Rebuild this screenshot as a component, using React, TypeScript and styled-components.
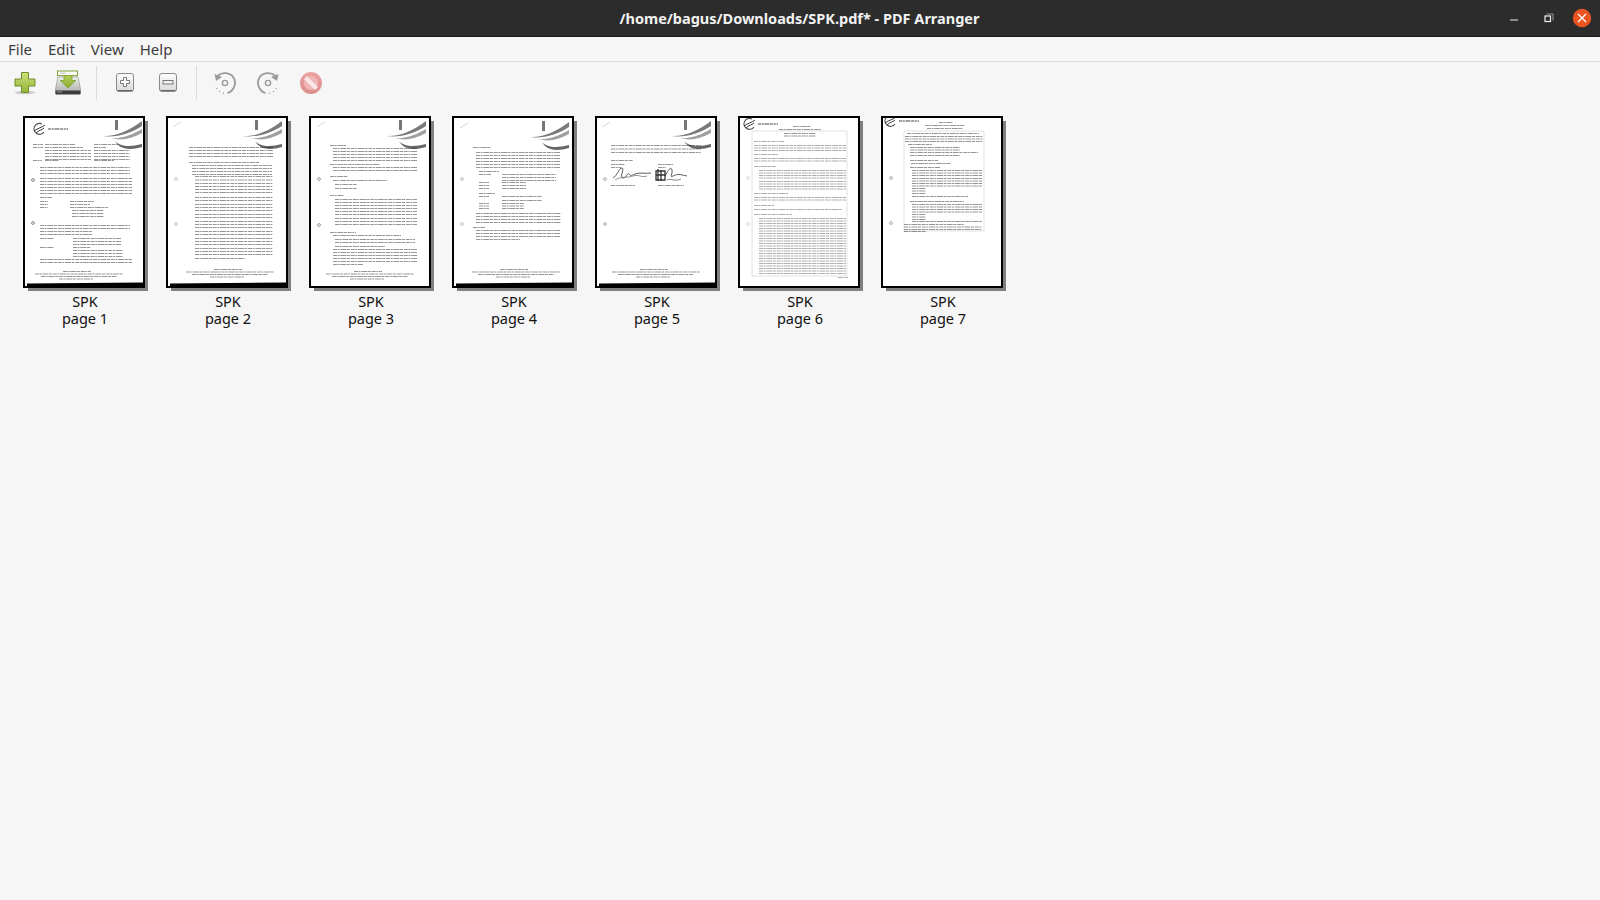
import React from 'react'
import styled, { createGlobalStyle } from 'styled-components'

const GlobalStyle = createGlobalStyle`
  html, body, #root {
    margin: 0;
    height: 100%;
  }
  body {
    background: #f6f6f6;
    font-family: "Noto Sans", "Open Sans", sans-serif;
    overflow: hidden;
  }
`

const Window = styled.div`
  width: 1600px;
  height: 900px;
  display: flex;
  flex-direction: column;
  background: #f6f6f6;
`

const TitleBar = styled.header`
  height: 36px;
  flex: none;
  display: grid;
  grid-template-columns: 1fr auto 1fr;
  align-items: center;
  background: #2d2c2c;
  border-bottom: 1px solid #1c1c1c;
`

const Title = styled.div`
  grid-column: 2;
  color: #f2f2f2;
  font-size: 14.5px;
  font-weight: 700;
  margin-right: 1px;
`

const WindowControls = styled.div`
  grid-column: 3;
  justify-self: end;
  display: flex;
  align-items: center;
  gap: 13px;
  padding-right: 8px;
`

const ControlSlot = styled.div`
  width: 20px;
  height: 20px;
  display: flex;
  align-items: center;
  justify-content: center;
`

const MinimizeSlot = styled(ControlSlot)`
  margin-right: 2px;
`

const MenuBar = styled.nav`
  height: 24px;
  flex: none;
  display: flex;
  align-items: center;
  gap: 16px;
  padding-left: 8px;
  border-bottom: 1px solid #dcdcdc;
  color: #3d3d3d;
  font-size: 15px;
`

const Toolbar = styled.div`
  height: 41px;
  flex: none;
  display: flex;
  align-items: center;
  padding-left: 3px;
  padding-bottom: 2px;
`

const ToolButton = styled.button`
  width: 43px;
  height: 38px;
  border: 0;
  padding: 0;
  background: none;
  display: flex;
  align-items: center;
  justify-content: center;
`

const ToolSeparator = styled.div`
  width: 1px;
  height: 34px;
  margin: 0 6.5px;
  background: #dcdcdc;
`

const PageGrid = styled.main`
  display: flex;
  align-items: flex-start;
  padding: 11px 0 0 14px;
`

const PageCell = styled.figure`
  width: 143px;
  margin: 0;
  display: flex;
  flex-direction: column;
  align-items: center;
`

const Thumb = styled.div`
  width: 122px;
  height: 172px;
  margin-right: 3px;
  box-sizing: border-box;
  border: 2px solid #000;
  background: #fff;
  box-shadow: 4px 4px 0 -1px #808080;
  overflow: hidden;
  svg {
    display: block;
    filter: blur(0.5px);
  }
`

const Caption = styled.figcaption`
  margin-top: 5px;
  padding-right: 1px;
  font-size: 14.5px;
  line-height: 17px;
  text-align: center;
  color: #111;
`

// [x, y, width, lines, step]
type Block = [number, number, number, number?, number?]

type PageData = {
  swoosh?: [number, number]
  logo?: [number, number]
  band?: boolean
  holes: [number, number]
  holeColor?: string
  box?: [number, number, number, number]
  blocks: Block[]
  light?: Block[]
  signatures?: boolean
}

const footer = (x: number, y: number): Block[] => [
  [x + 28, y, 28, 1],
  [x, y + 2.5, 88, 1],
  [x + 6, y + 5, 76, 1],
  [x + 24, y + 7.5, 34, 1],
]

const pages: PageData[] = [
  {
    swoosh: [84, 3],
    logo: [16, 13],
    band: true,
    holes: [64, 107],
    holeColor: '#555',
    blocks: [
      [10, 28, 10, 1], [22, 28, 30, 1], [71, 28, 24, 1],
      [10, 31, 10, 1], [22, 31, 38, 1], [71, 31, 12, 1],
      [22, 34, 46, 4, 3], [71, 34, 36, 4, 3],
      [10, 44, 9, 1], [22, 44, 14, 1], [71, 44, 20, 1],
      [17, 51, 90, 3, 3],
      [17, 62, 92, 6, 3],
      [17, 81, 12, 1],
      [17, 85, 8, 3, 3], [47, 85, 24, 1], [47, 88, 20, 1], [47, 91, 38, 1],
      [49, 94, 32, 3, 3],
      [17, 109, 90, 2, 3], [17, 115, 52, 2, 3],
      [17, 122, 14, 1], [50, 122, 48, 3, 3],
      [17, 131, 14, 1], [50, 131, 18, 1], [50, 134, 50, 3, 3],
      [17, 143, 92, 2, 3],
      ...footer(12, 155),
    ],
  },
  {
    swoosh: [81, 3],
    band: true,
    holes: [63, 108],
    holeColor: '#aaa',
    blocks: [
      [23, 31, 84, 4, 3],
      [23, 46, 70, 1],
      [26, 49, 80, 4, 3],
      [29, 60, 78, 3, 3.5],
      [29, 70, 78, 3, 3],
      [29, 81, 78, 2, 3],
      [29, 88, 78, 3, 3],
      [29, 98, 78, 2, 3],
      [29, 105, 78, 3, 3],
      [29, 115, 78, 2, 3],
      [29, 122, 78, 3, 3],
      [29, 132, 78, 3, 3],
      [29, 142, 50, 1],
      ...footer(20, 153),
    ],
  },
  {
    swoosh: [82, 3],
    holes: [63, 109],
    holeColor: '#777',
    blocks: [
      [21, 29, 16, 1], [24, 32, 84, 5, 3],
      [21, 48, 50, 1], [24, 51, 84, 2, 3],
      [21, 60, 18, 1], [24, 64, 54, 1], [26, 68, 22, 2, 4],
      [21, 79, 14, 1], [26, 83, 82, 6, 3], [26, 102, 82, 3, 3],
      [21, 116, 26, 1], [24, 119, 68, 1], [26, 123, 80, 2, 3], [26, 130, 50, 1],
      [24, 133, 84, 3, 3], [24, 142, 84, 2, 3], [24, 148, 30, 1],
      ...footer(17, 155),
    ],
  },
  {
    swoosh: [82, 4],
    band: true,
    holes: [63, 108],
    holeColor: '#aaa',
    blocks: [
      [21, 31, 18, 1], [24, 36, 84, 6, 3],
      [27, 55, 20, 1], [27, 58, 12, 1], [50, 58, 54, 3, 3], [27, 66, 10, 3, 3], [50, 66, 24, 3, 3],
      [27, 77, 16, 1], [27, 80, 10, 1], [50, 80, 40, 2, 4], [27, 87, 10, 3, 2.5], [50, 87, 22, 3, 2.5],
      [24, 97, 85, 4, 3],
      [21, 111, 12, 1], [24, 114, 84, 3, 3], [24, 123, 44, 1],
      ...footer(20, 153),
    ],
  },
  {
    swoosh: [81, 3],
    band: true,
    holes: [63, 108],
    holeColor: '#888',
    signatures: true,
    blocks: [
      [16, 29, 90, 3, 3.5],
      [16, 44, 22, 1], [16, 48, 14, 1], [63, 48, 15, 1], [16, 51, 10, 1], [63, 51, 8, 1],
      [16, 69, 24, 1], [63, 69, 26, 1],
      ...footer(17, 153),
    ],
  },
  {
    logo: [11, 8],
    holes: [62, 108],
    holeColor: '#ccc',
    box: [14, 15, 95, 145],
    blocks: [[55, 10, 18, 1], [41, 13, 42, 1], [46, 17, 32, 2, 2.5]],
    light: [
      [16, 25, 30, 1], [16, 29, 92, 3, 2.5],
      [16, 38, 24, 1], [16, 42, 92, 2, 2.5],
      [16, 50, 22, 1], [21, 54, 87, 4, 2.5], [21, 65, 87, 4, 2.5],
      [16, 77, 34, 1], [16, 81, 92, 2, 2.5],
      [16, 89, 20, 1], [16, 93, 88, 1],
      [16, 98, 38, 1], [21, 102, 87, 23, 2.5],
      [100, 161, 10, 1],
    ],
  },
  {
    logo: [9, 5],
    holes: [62, 107],
    holeColor: '#888',
    box: [23, 15, 80, 100],
    blocks: [
      [58, 6, 14, 1], [44, 9, 40, 1], [46, 12, 36, 1],
      [26, 17, 72, 1], [24, 20, 78, 3, 2.5],
      [27, 28, 24, 1], [29, 31, 50, 2, 2.5], [29, 36, 68, 1], [29, 39, 50, 1],
      [29, 44, 28, 1], [30, 47, 40, 1],
      [29, 51, 30, 1], [31, 54, 70, 3, 2.5], [31, 62, 70, 4, 2.5],
      [31, 72, 14, 3, 2.5], [31, 80, 56, 1],
      [29, 85, 54, 1], [31, 88, 70, 4, 2.5],
      [31, 98, 14, 3, 2.5], [31, 105, 70, 1],
      [23, 108, 60, 1], [23, 110.5, 78, 2, 2.5], [23, 115, 22, 1],
    ],
  },
]

const Lines = ({ blocks, color, opacity }: { blocks: Block[]; color: string; opacity: number }) => {
  const d = blocks
    .flatMap(([x, y, w, n = 1, step = 3]) =>
      Array.from({ length: n }, (_, i) => `M${x} ${y + i * step + 0.5}h${w}`),
    )
    .join('')
  return <path d={d} stroke={color} strokeOpacity={opacity} strokeWidth=".8" strokeDasharray="4 .6 2 .7 6 .6 3 .8" fill="none" />
}

const Swoosh = ({ x, y }: { x: number; y: number }) => (
  <g transform={`translate(${x} ${y})`}>
    <path d="M-5 17C8 18 22 12 35 2L35 7C24 14 10 19 -5 17Z" fill="#7a7a7a" />
    <path d="M4 19C16 20 26 15 35 10L35 14C24 20 14 22 4 19Z" fill="#a0a0a0" />
    <path d="M8 22C13 28 24 28 35 25L35 28C22 32 12 30 8 22Z" fill="#666" />
    <rect x="8" y="1" width="3" height="10" fill="#777" />
    <path d="M-74 8L-66 3" stroke="#ccc" strokeWidth=".8" />
  </g>
)

const SmallLogo = ({ x, y }: { x: number; y: number }) => (
  <g transform={`translate(${x} ${y})`}>
    <path d="M3 -5A5.5 5.5 0 1 0 5 3" fill="none" stroke="#555" strokeWidth="1.1" />
    <path d="M-5 2C-1 -1 2 -1 6 -4M-3 4C0 1 3 1 5 -1" stroke="#222" strokeWidth=".9" fill="none" />
    <path d="M9 0h20" stroke="#444" strokeWidth="1.2" strokeDasharray="3 .7 2 .7 5 .7" />
  </g>
)

const Signatures = () => (
  <g fill="none" stroke="#333" strokeWidth=".8">
    <path d="M18 62C22 60 24 52 27 52S24 62 28 62 32 56 34 58 36 60 40 58 50 58 56 57" />
    <path d="M20 64C26 60 32 62 38 60S46 62 52 60" stroke="#777" />
    <path d="M61 55h9v9h-9zM63 53v12M66 54v11M61 59h10" strokeWidth="1.3" />
    <path d="M70 60C73 54 76 50 77 54S74 62 78 60 84 58 92 60" />
    <path d="M72 64C76 62 80 66 86 63" stroke="#666" />
  </g>
)

const Sheet = ({ page }: { page: PageData }) => (
  <svg width="118" height="168" viewBox="2 2 118 168">
    {page.swoosh && <Swoosh x={page.swoosh[0]} y={page.swoosh[1]} />}
    {page.logo && <SmallLogo x={page.logo[0]} y={page.logo[1]} />}
    {page.box && (
      <rect x={page.box[0]} y={page.box[1]} width={page.box[2]} height={page.box[3]} fill="none" stroke="#ccc" strokeWidth=".6" />
    )}
    {page.holes.map((y) => (
      <circle key={y} cx="10" cy={y} r="1.4" fill="none" stroke={page.holeColor} strokeWidth=".7" />
    ))}
    <Lines blocks={page.blocks} color="#222" opacity={0.6} />
    {page.light && <Lines blocks={page.light} color="#333" opacity={0.5} />}
    {page.signatures && <Signatures />}
    {page.band && <path d="M4 167.5L120 166.5V171H4Z" fill="#000" />}
  </svg>
)

const AddIcon = () => (
  <svg width="24" height="26" viewBox="0 0 24 26">
    <defs>
      <linearGradient id="addFill" x1="0" y1="0" x2="0" y2="1">
        <stop offset="0" stopColor="#cfe07a" />
        <stop offset="1" stopColor="#93b43a" />
      </linearGradient>
    </defs>
    <ellipse cx="12" cy="22.5" rx="10" ry="1.8" fill="#999" opacity=".45" />
    <path d="M8.5 2.5h7v6.5h6.5v7h-6.5v6.5h-7v-6.5H2v-7h6.5z" fill="url(#addFill)" stroke="#6f8f2a" />
  </svg>
)

const SaveIcon = () => (
  <svg width="26" height="26" viewBox="0 0 26 26">
    <defs>
      <linearGradient id="driveFill" x1="0" y1="0" x2="0" y2="1">
        <stop offset="0" stopColor="#f0f0ee" />
        <stop offset="1" stopColor="#a9aba6" />
      </linearGradient>
      <linearGradient id="arrowFill" x1="0" y1="0" x2="0" y2="1">
        <stop offset="0" stopColor="#b5cf5a" />
        <stop offset="1" stopColor="#8bab30" />
      </linearGradient>
    </defs>
    <path d="M3 7h20l2.5 12v4.5H.5V19z" fill="url(#driveFill)" stroke="#8d8f8a" strokeWidth=".6" />
    <rect x=".5" y="20.5" width="25" height="4" rx="1" fill="#3c3c3c" />
    <path d="M2 22h5" stroke="#9a9a9a" />
    <rect x="2.5" y="1" width="20" height="4.6" fill="#fff" stroke="#7f9f34" />
    <path d="M5 3.2h6M14 3.2h1" stroke="#bbb" />
    <path d="M9 5.5h8v5h4L13 18 5 10.5h4z" fill="url(#arrowFill)" stroke="#7f9f34" strokeWidth=".8" />
  </svg>
)

const ZoomKey = ({ minus }: { minus?: boolean }) => (
  <svg width="20" height="21" viewBox="0 0 20 21">
    <defs>
      <linearGradient id={minus ? 'keyMinus' : 'keyPlus'} x1="0" y1="0" x2="0" y2="1">
        <stop offset="0" stopColor="#fff" />
        <stop offset="1" stopColor="#d8d8d6" />
      </linearGradient>
    </defs>
    <rect x="1.5" y="1.5" width="17" height="18" rx="2.5" fill={`url(#${minus ? 'keyMinus' : 'keyPlus'})`} stroke="#8a8a8a" />
    <path d="M2.5 18.5h15" stroke="#666" />
    {minus ? (
      <rect x="5" y="8.5" width="10" height="3.5" fill="#f4f4f4" stroke="#777" />
    ) : (
      <path d="M8.5 5.5h3v3h3v3h-3v3h-3v-3h-3v-3h3z" fill="#fff" stroke="#777" />
    )}
  </svg>
)

const RotateIcon = ({ flip }: { flip?: boolean }) => (
  <svg width="24" height="24" viewBox="0 0 24 24" style={flip ? { transform: 'scaleX(-1)' } : undefined}>
    <circle cx="12" cy="12" r="2.6" fill="none" stroke="#9a9a9a" strokeWidth="1.4" />
    <path d="M5 4.5C9 1 17 1 20.5 6.5S21 20 14.5 22" fill="none" stroke="#9a9a9a" strokeWidth="1.8" />
    <path d="M11 22.4l-1-.2M7 20.8l-.9-.6M4 17.8l-.5-.8" fill="none" stroke="#9a9a9a" strokeWidth="1.3" />
    <path d="M1.5 3L9 6 3 10z" fill="#9a9a9a" />
  </svg>
)

const DeleteIcon = () => (
  <svg width="24" height="24" viewBox="0 0 24 24">
    <defs>
      <linearGradient id="stopFill" x1="0" y1="0" x2="0" y2="1">
        <stop offset="0" stopColor="#eba3a3" />
        <stop offset="1" stopColor="#dd8b8b" />
      </linearGradient>
    </defs>
    <circle cx="12" cy="12" r="11" fill="url(#stopFill)" />
    <circle cx="12" cy="12" r="7" fill="#efb6b6" />
    <path d="M6.5 6.5l11 11" stroke="#fae8e8" strokeWidth="4.2" />
  </svg>
)

const App = () => (
  <Window>
    <GlobalStyle />
    <TitleBar>
      <Title>/home/bagus/Downloads/SPK.pdf* - PDF Arranger</Title>
      <WindowControls>
        <MinimizeSlot>
          <svg width="10" height="10" viewBox="0 0 10 10">
            <path d="M1 7h8" stroke="#eee" strokeWidth="1" />
          </svg>
        </MinimizeSlot>
        <ControlSlot>
          <svg width="10" height="10" viewBox="0 0 10 10">
            <path d="M2.5 1h6.5v6.5" fill="none" stroke="#999" />
            <rect x="1" y="3" width="5.5" height="5.5" fill="none" stroke="#f2f2f2" strokeWidth="1.2" />
          </svg>
        </ControlSlot>
        <ControlSlot>
          <svg width="20" height="20" viewBox="0 0 20 20">
            <circle cx="10" cy="10" r="9.2" fill="#e95420" />
            <path d="M6 6l8 8M14 6l-8 8" stroke="#fff" strokeWidth="1.3" />
          </svg>
        </ControlSlot>
      </WindowControls>
    </TitleBar>
    <MenuBar>
      <span>File</span>
      <span>Edit</span>
      <span>View</span>
      <span>Help</span>
    </MenuBar>
    <Toolbar>
      <ToolButton><AddIcon /></ToolButton>
      <ToolButton><SaveIcon /></ToolButton>
      <ToolSeparator />
      <ToolButton><ZoomKey /></ToolButton>
      <ToolButton><ZoomKey minus /></ToolButton>
      <ToolSeparator />
      <ToolButton><RotateIcon /></ToolButton>
      <ToolButton><RotateIcon flip /></ToolButton>
      <ToolButton><DeleteIcon /></ToolButton>
    </Toolbar>
    <PageGrid>
      {pages.map((page, i) => (
        <PageCell key={i}>
          <Thumb>
            <Sheet page={page} />
          </Thumb>
          <Caption>
            SPK
            <br />
            page {i + 1}
          </Caption>
        </PageCell>
      ))}
    </PageGrid>
  </Window>
)

export default App
